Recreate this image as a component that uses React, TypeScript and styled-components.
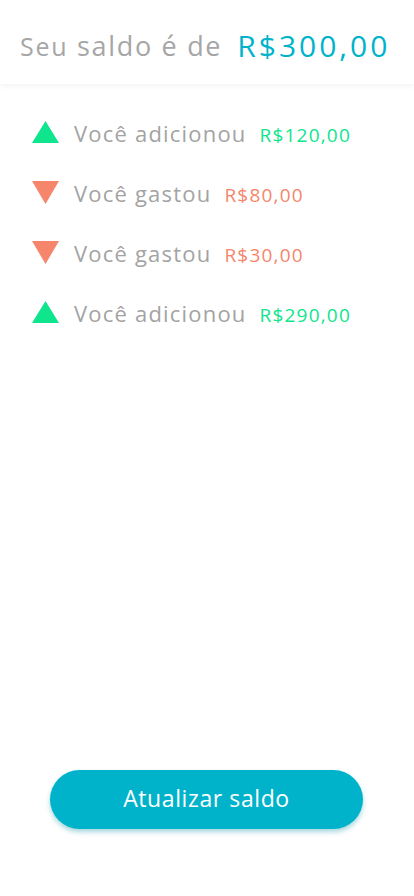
import React from "react";
import styled, { createGlobalStyle } from "styled-components";

const Global = createGlobalStyle`
  html, body { margin: 0; padding: 0; background: #fff; }
  body { font-family: "Open Sans", "Lato", sans-serif; }
  #root { min-height: 896px; }
`;

const Page = styled.div`
  width: 414px;
  height: 896px;
  display: flex;
  flex-direction: column;
  background: #fff;
`;

const Header = styled.header`
  height: 84px;
  display: flex;
  align-items: center;
  padding: 6px 0 0 20px;
  gap: 15px;
  box-shadow: 0 2px 6px rgba(0, 0, 0, 0.05);
  box-sizing: border-box;
`;

const Label = styled.span`
  font-size: 27px;
  color: #a6a6a6;
  letter-spacing: 1.7px;
`;

const Small = styled.span`
  font-size: 25px;
`;

const Balance = styled.span`
  font-size: 30px;
  color: #00b3cb;
  letter-spacing: 3px;
`;

const List = styled.ul`
  list-style: none;
  margin: 0;
  padding: 36px 0 0 32px;
  display: flex;
  flex-direction: column;
  gap: 36px;
  flex: 1;
`;

const Row = styled.li`
  display: flex;
  align-items: center;
  height: 24px;
`;

const Arrow = styled.svg`
  width: 27px;
  height: 24px;
  margin-right: 15px;
  flex: none;
`;

const Line = styled.div`
  display: flex;
  align-items: baseline;
  gap: 13px;
  margin-top: 1px;
`;

const Text = styled.span`
  font-size: 22px;
  color: #a3a3a3;
  letter-spacing: 1.2px;
`;

const Amount = styled.span<{ $up: boolean }>`
  font-size: 19px;
  color: ${(p) => (p.$up ? "#0ee58d" : "#f5866c")};
  letter-spacing: 1.2px;
`;

const Footer = styled.div`
  display: flex;
  justify-content: center;
  padding-bottom: 67px;
  padding-right: 1px;
`;

const Button = styled.button`
  width: 313px;
  height: 59px;
  border: none;
  border-radius: 30px;
  background: #00b3cb;
  color: #fff;
  font-family: "Open Sans", "Lato", sans-serif;
  font-size: 23px;
  letter-spacing: 0.6px;
  padding-bottom: 4px;
  box-shadow: 0 3px 5px rgba(0, 140, 160, 0.35);
  cursor: pointer;
`;

const items = [
  { up: true, text: "Você adicionou", value: "R$120,00" },
  { up: false, text: "Você gastou", value: "R$80,00" },
  { up: false, text: "Você gastou", value: "R$30,00" },
  { up: true, text: "Você adicionou", value: "R$290,00" },
];

export default function App() {
  return (
    <Page>
      <Global />
      <Header>
        <Label>
          <Small>Seu</Small> saldo é de
        </Label>
        <Balance>R$300,00</Balance>
      </Header>
      <List>
        {items.map((it, i) => (
          <Row key={i}>
            <Arrow viewBox="0 0 27 24">
              {it.up ? (
                <polygon points="13.5,1 27,23 0,23" fill="#0ee58d" />
              ) : (
                <polygon points="0,1 27,1 13.5,24" fill="#f5866c" />
              )}
            </Arrow>
            <Line>
              <Text>{it.text}</Text>
              <Amount $up={it.up}>{it.value}</Amount>
            </Line>
          </Row>
        ))}
      </List>
      <Footer>
        <Button>Atualizar saldo</Button>
      </Footer>
    </Page>
  );
}
